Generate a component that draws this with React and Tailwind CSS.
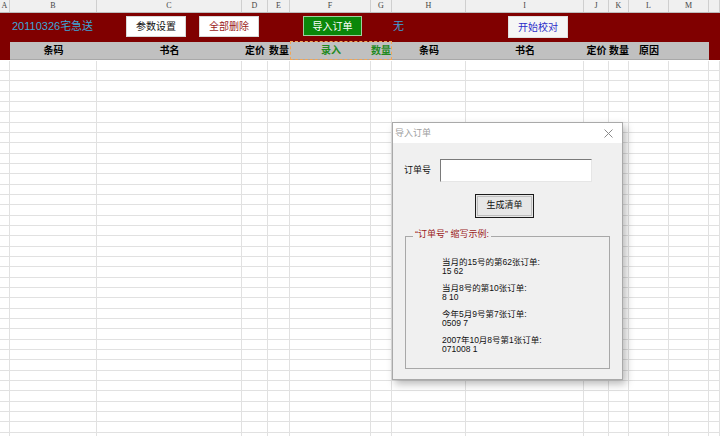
const COLS = [
  { k: 'A', w: 'w-[10px]' },
  { k: 'B', w: 'w-[87px]' },
  { k: 'C', w: 'w-[145px]' },
  { k: 'D', w: 'w-[26px]' },
  { k: 'E', w: 'w-[22px]' },
  { k: 'F', w: 'w-[81px]' },
  { k: 'G', w: 'w-[21px]' },
  { k: 'H', w: 'w-[74px]' },
  { k: 'I', w: 'w-[118px]' },
  { k: 'J', w: 'w-[25px]' },
  { k: 'K', w: 'w-[20px]' },
  { k: 'L', w: 'w-[40px]' },
  { k: 'M', w: 'w-[40px]' },
  { k: '', w: 'w-[11px]' },
];

const CJK = "font-['Liberation_Sans','Noto_Sans_CJK_SC',sans-serif]";

function ColumnHeader() {
  return (
    <div className="flex h-[13px] bg-[#f0f0f0] border-b border-[#bdbdbd]">
      {COLS.map((c, i) => (
        <div
          key={i}
          className={`${c.w} shrink-0 border-r border-[#cfcfcf] flex items-center justify-center text-[8px] leading-none text-[#444] font-['Liberation_Serif',serif]`}
        >
          {c.k}
        </div>
      ))}
    </div>
  );
}

function TopBand() {
  return (
    <div className={`flex items-start h-[29px] bg-[#800000] pt-[3px] ${CJK}`}>
      <span className="w-[114px] ml-[12px] mt-[5px] text-[11px] leading-none text-[#3aa6d8]">20110326宅急送</span>
      <div className="w-[60px] h-[21px] bg-white border border-[#d8d8d8] flex items-center justify-center text-[10px] text-[#111]">
        参数设置
      </div>
      <div className="w-[60px] h-[21px] ml-[13px] bg-white border border-[#d8d8d8] flex items-center justify-center text-[10px] text-[#9b1c1c]">
        全部删除
      </div>
      <div className="w-[59px] h-[20px] ml-[44px] bg-[#0a870a] border border-[#9fcf9f] flex items-center justify-center text-[10px] text-white">
        导入订单
      </div>
      <span className="ml-[31px] mt-[5px] text-[11px] leading-none text-[#3aa0d8]">无</span>
      <div className="w-[60px] h-[22px] ml-[104px] bg-[#f6f6f6] border border-[#e0e0e0] flex items-center justify-center text-[10px] text-[#2b2bc8]">
        开始校对
      </div>
    </div>
  );
}

function HeaderCell({ w, children, green }) {
  return (
    <div
      className={`${w} shrink-0 flex items-center justify-center whitespace-nowrap text-[10px] font-bold leading-none ${
        green ? 'text-[#1f8a1f]' : 'text-black'
      }`}
    >
      {children}
    </div>
  );
}

function FieldHeader() {
  return (
    <div className={`flex h-[18px] bg-[#800000] ${CJK}`}>
      <div className="w-[10px] shrink-0" />
      <div className="flex bg-[#c0c0c0] border-b border-[#a8a8a8]">
        <HeaderCell w="w-[87px]">条码</HeaderCell>
        <HeaderCell w="w-[145px]">书名</HeaderCell>
        <HeaderCell w="w-[26px]">定价</HeaderCell>
        <HeaderCell w="w-[22px]">数量</HeaderCell>
        <div className="flex border border-dashed border-[#f2a657] -my-px">
          <HeaderCell w="w-[80px]" green>录入</HeaderCell>
          <HeaderCell w="w-[20px]" green>数量</HeaderCell>
        </div>
        <HeaderCell w="w-[74px]">条码</HeaderCell>
        <HeaderCell w="w-[118px]">书名</HeaderCell>
        <HeaderCell w="w-[25px]">定价</HeaderCell>
        <HeaderCell w="w-[20px]">数量</HeaderCell>
        <HeaderCell w="w-[40px]">原因</HeaderCell>
        <div className="w-[40px] shrink-0" />
      </div>
    </div>
  );
}

function Grid() {
  const rows = Array.from({ length: 37 }, (_, i) => i);
  return (
    <div className="pt-px">
      {rows.map((r) => (
        <div
          key={r}
          className={`flex border-b border-[#e1e1e1] ${r % 3 === 2 ? 'h-[11px]' : 'h-[10px]'}`}
        >
          {COLS.map((c, i) => (
            <div key={i} className={`${c.w} shrink-0 border-r border-[#e1e1e1]`} />
          ))}
        </div>
      ))}
    </div>
  );
}

function Dialog() {
  const examples = [
    ['当月的15号的第62张订单:', '15 62'],
    ['当月8号的第10张订单:', '8 10'],
    ['今年5月9号第7张订单:', '0509 7'],
    ['2007年10月8号第1张订单:', '071008 1'],
  ];
  return (
    <div
      className={`absolute left-[392px] top-[122px] w-[231px] h-[258px] border border-[#a9a9a9] bg-[#f0f0f0] shadow-[3px_4px_8px_rgba(0,0,0,0.28)] flex flex-col ${CJK}`}
    >
      <div className="h-[20px] bg-white flex items-center justify-between pl-[2px] pr-[9px]">
        <span className="text-[9px] leading-none text-[#a0a0a0]">导入订单</span>
        <svg width="9" height="9" viewBox="0 0 9 9" className="text-[#8a8a8a]">
          <path d="M0.5 0.5 L8.5 8.5 M8.5 0.5 L0.5 8.5" stroke="currentColor" strokeWidth="1" fill="none" />
        </svg>
      </div>
      <div className="flex items-center mt-[16px] ml-[11px]">
        <span className="w-[36px] text-[9px] leading-none text-[#111]">订单号</span>
        <div className="w-[152px] h-[23px] bg-white border-t border-l border-[#7a7a7a] border-r border-b border-r-[#e6e6e6] border-b-[#e6e6e6]" />
      </div>
      <div className="flex justify-center mt-[12px] pr-[6px]">
        <div className="w-[59px] h-[24px] border border-[#1a1a1a] bg-[#e6e6e6] p-px">
          <div className="w-full h-full border border-[#bdbdbd] flex items-center justify-center text-[9px] text-[#111]">
            生成清单
          </div>
        </div>
      </div>
      <div className="relative mt-[18px] ml-[12px] w-[205px] h-[133px] border border-[#a8a8a8]">
        <span className="absolute left-[7px] -top-[7px] bg-[#f0f0f0] px-[2px] text-[9px] leading-none text-[#9b1c1c]">
          “订单号” 缩写示例:
        </span>
        <div className="pt-[21px] pl-[36px] flex flex-col gap-[8px]">
          {examples.map(([a, b]) => (
            <div key={a} className="text-[8.5px] leading-[9px] text-[#111]">
              <div>{a}</div>
              <div>{b}</div>
            </div>
          ))}
        </div>
      </div>
    </div>
  );
}

export default function App() {
  return (
    <div className="relative w-[720px] h-[436px] overflow-hidden bg-white">
      <ColumnHeader />
      <TopBand />
      <FieldHeader />
      <Grid />
      <Dialog />
    </div>
  );
}
